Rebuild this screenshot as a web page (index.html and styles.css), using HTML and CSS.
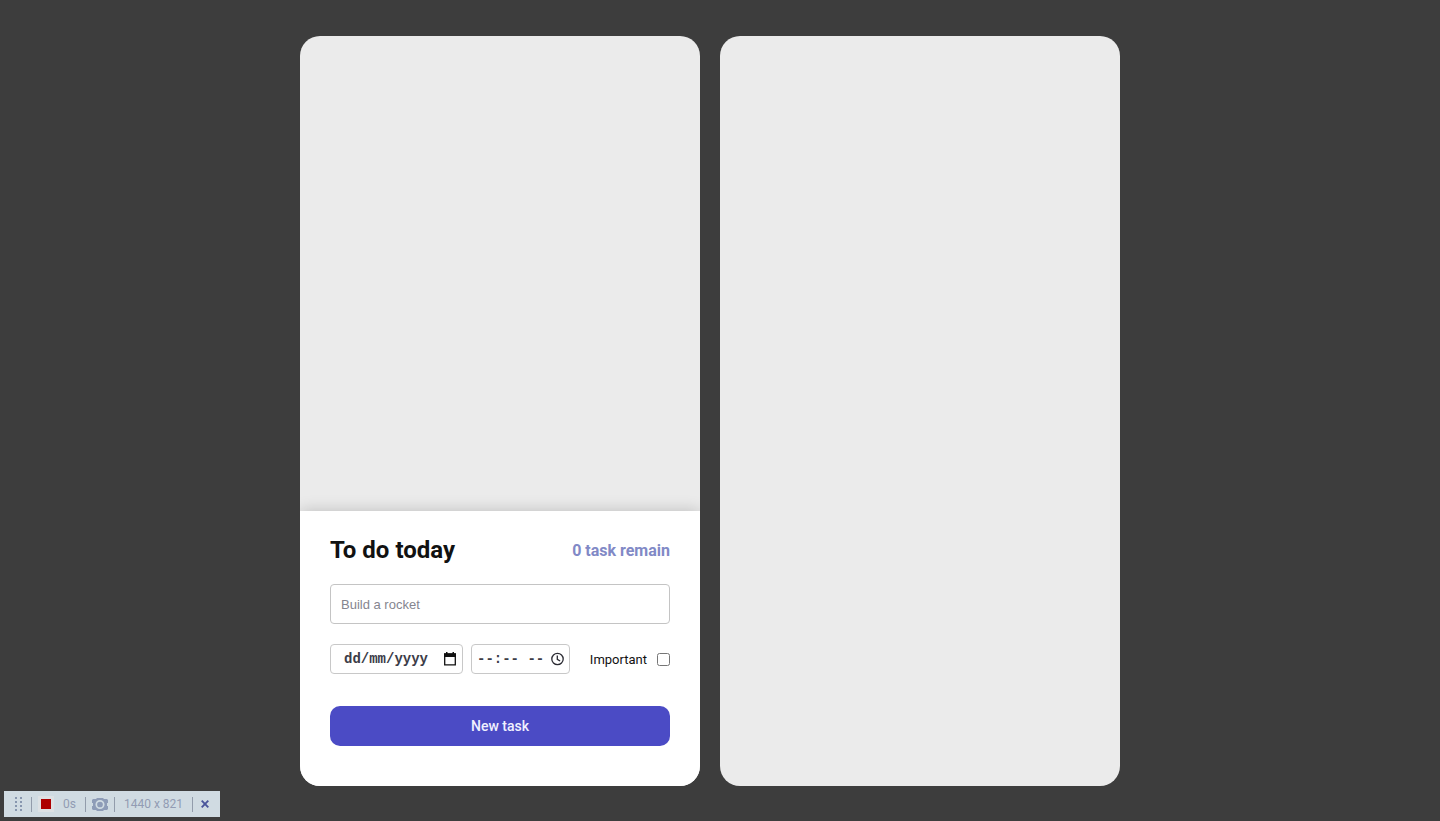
FILE: index.html
```html
<!DOCTYPE html>
<html lang="en">
<head>
<meta charset="utf-8">
<meta name="viewport" content="width=device-width, initial-scale=1">
<title>To do today</title>
<link rel="stylesheet" href="styles.css">
</head>
<body>
<main class="board">
  <section class="card">
    <div class="task-list"></div>
    <form class="composer">
      <header class="composer-head">
        <h1 class="title">To do today</h1>
        <p class="remain">0 task remain</p>
      </header>
      <input class="task-name" type="text" placeholder="Build a rocket" aria-label="Task">
      <div class="options">
        <div class="field field-date">
          <input class="field-input" type="text" placeholder="dd/mm/yyyy" aria-label="Date">
          <button class="field-button" type="button" aria-label="Pick a date">
            <svg width="14" height="14" viewBox="0 0 14 14"><path d="M1.7 2h10.6v10.8H1.700z" fill="none" stroke="#111" stroke-width="1.3"/><path d="M1 1.4h12V5H1zM3 0h1.5v2H3zM9.500 0H11v2H9.500z" fill="#111"/></svg>
          </button>
        </div>
        <div class="field field-time">
          <input class="field-input" type="text" placeholder="--:-- --" aria-label="Time">
          <button class="field-button" type="button" aria-label="Pick a time">
            <svg width="14" height="14" viewBox="0 0 14 14" fill="none" stroke="#2b2b33" stroke-width="1.3"><circle cx="7.500" cy="7" r="5.700"/><path d="M7.300 3.500v3.800l2.800 1.700"/></svg>
          </button>
        </div>
        <label class="important">Important <input class="check" type="checkbox"></label>
      </div>
      <button class="submit" type="submit">New task</button>
    </form>
  </section>
  <section class="card"></section>
</main>
<aside class="recorder" aria-label="Recorder">
  <svg class="grip" width="7" height="14" viewBox="0 0 7 14" fill="#8796ae"><path d="M0 0h2v2H0zM5 0h2v2H5zM0 4h2v2H0zM5 4h2v2H5zM0 8h2v2H0zM5 8h2v2H5zM0 12h2v2H0zM5 12h2v2H5z"/></svg>
  <span class="rule"></span>
  <button class="stop" type="button" aria-label="Stop"></button>
  <span class="label">0s</span>
  <span class="rule"></span>
  <button class="tool" type="button" aria-label="Take a picture">
    <svg width="16" height="13" viewBox="0 0 16 13"><path d="M1 1h3l1-1h6l1 1h3l1 1v3h-1v3h1v3l-1 1h-3l-1 1H5l-1-1H1l-1-1V8h1V5H0V2z" fill="#8e9cb7"/><circle cx="8" cy="6.500" r="3.700" fill="none" stroke="#d0dbe2" stroke-width="1.700"/></svg>
  </button>
  <span class="rule"></span>
  <span class="label">1440 x 821</span>
  <span class="rule"></span>
  <button class="tool close" type="button" aria-label="Close">
    <svg width="8" height="8" viewBox="0 0 8 8"><path d="M.7.7l6.600 6.600M7.300.7L.7 7.300" stroke="#4a559b" stroke-width="1.900"/></svg>
  </button>
</aside>
</body>
</html>
```
FILE: styles.css
```css
* {
  box-sizing: border-box;
}

body {
  margin: 0;
  background: #3d3d3d;
  color: #111;
  font-family: Roboto, "Liberation Sans", sans-serif;
}

button {
  padding: 0;
  border: 0;
  background: none;
  font: inherit;
}

.board {
  display: flex;
  justify-content: center;
  gap: 20px;
  min-height: 100vh;
  padding: 36px 20px 35px 0;
}

.card {
  display: flex;
  flex-direction: column;
  flex: 0 1 400px;
  overflow: hidden;
  border-radius: 20px;
  background: #ebebeb;
}

.task-list {
  flex: 1;
}

.composer {
  display: flex;
  flex-direction: column;
  padding: 25px 30px 40px;
  background: #fff;
  box-shadow: 0 0 15px rgba(0, 0, 0, 0.2);
}

.composer-head {
  display: flex;
  align-items: center;
  justify-content: space-between;
  margin-bottom: 20px;
}

.title {
  margin: 0;
  font-size: 24px;
  line-height: 28px;
}

.remain {
  margin: 0;
  color: #8189c6;
  font-size: 16px;
  font-weight: 700;
}

.task-name {
  width: 100%;
  height: 40px;
  margin-bottom: 20px;
  padding: 0 10px;
  border: 1px solid #c4c4c4;
  border-radius: 4px;
  font-family: "Liberation Sans", sans-serif;
  font-size: 13px;
}

.task-name::placeholder {
  color: #85858f;
}

.options {
  display: flex;
  align-items: center;
  gap: 8px;
  margin-bottom: 32px;
}

.field {
  display: flex;
  align-items: center;
  height: 30px;
  padding: 0 5px;
  border: 1px solid #c8c8c8;
  border-radius: 4px;
}

.field-date {
  width: 133px;
  padding-left: 13px;
}

.field-time {
  width: 99px;
}

.field-input {
  flex: 1;
  min-width: 0;
  padding: 0;
  border: 0;
  background: none;
  font-family: "Liberation Mono", monospace;
  font-size: 14px;
  font-weight: 700;
}

.field-input::placeholder {
  color: #3c3c48;
}

.field-button,
.tool {
  display: flex;
}

.important {
  display: flex;
  align-items: center;
  gap: 10px;
  margin-left: auto;
  font-size: 13px;
}

.check {
  width: 13px;
  height: 13px;
  margin: 0;
}

.submit {
  height: 40px;
  border-radius: 10px;
  background: #4b4bc5;
  color: #f0f0ff;
  font-size: 14px;
  font-weight: 500;
}

.recorder {
  position: fixed;
  bottom: 4px;
  left: 4px;
  display: flex;
  align-items: center;
  gap: 6px;
  height: 26px;
  padding: 0 11px;
  background: #d0dbe2;
  color: #929cb3;
  font-size: 12px;
}

.grip {
  margin-right: 3px;
}

.rule {
  width: 1px;
  height: 15px;
  background: #929cab;
}

.stop {
  width: 16px;
  height: 16px;
  border: 3px solid #dde1e4;
  background: #ad0000;
}

.label {
  margin: 0 3px;
}

.close {
  margin-left: 2px;
}
```
